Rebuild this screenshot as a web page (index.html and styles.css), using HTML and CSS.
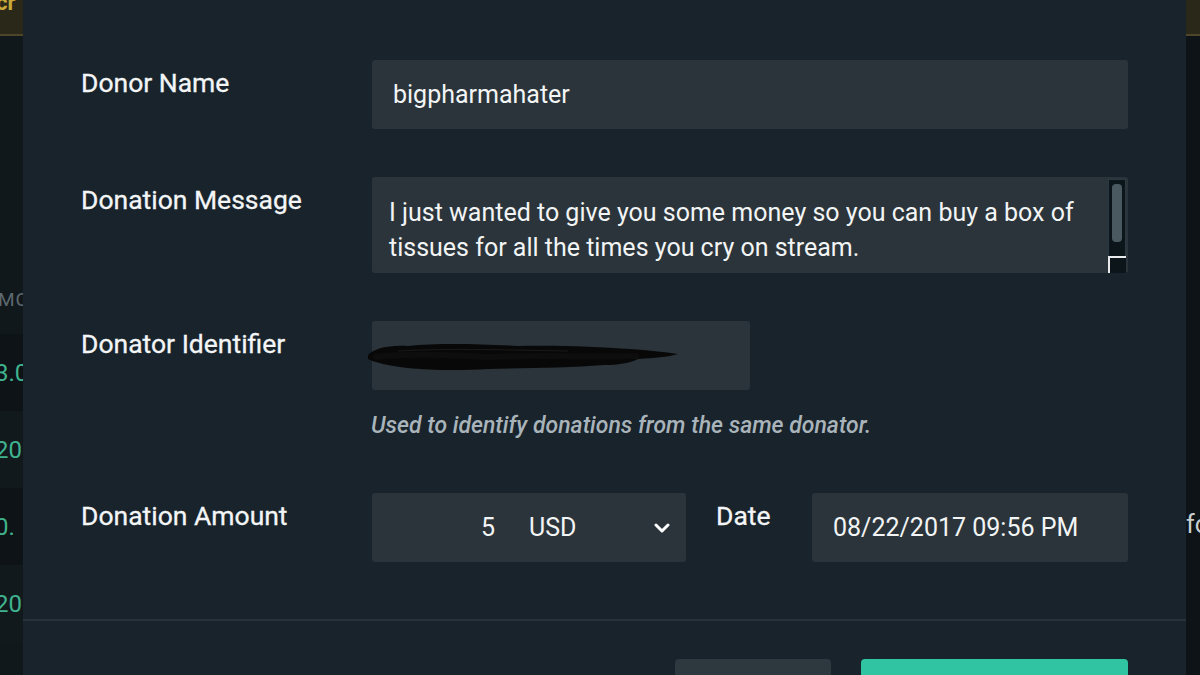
FILE: index.html
```html
<!DOCTYPE html>
<html>
<head>
<meta charset="utf-8">
<link rel="stylesheet" href="styles.css">
</head>
<body>
<div class="screen">
  <aside class="side side-left">
    <div class="side-top"><span class="side-top-text">cr</span></div>
    <div class="side-head">MC</div>
    <div class="side-row odd"><span class="amt">3.0</span></div>
    <div class="side-row"><span class="amt">20</span></div>
    <div class="side-row odd"><span class="amt">0.</span></div>
    <div class="side-row"><span class="amt">20.</span></div>
  </aside>

  <main class="modal">
    <div class="modal-body">
      <div class="field">
        <label class="label">Donor Name</label>
        <div class="control">
          <div class="input">bigpharmahater</div>
        </div>
      </div>

      <div class="field">
        <label class="label">Donation Message</label>
        <div class="control">
          <div class="input textarea">
            <p class="ta-text">I just wanted to give you some money so you can buy a box of tissues for all the times you cry on stream.</p>
            <div class="scrollbar"><div class="thumb"></div></div>
            <div class="resizer"></div>
          </div>
        </div>
      </div>

      <div class="field field-id">
        <label class="label">Donator Identifier</label>
        <div class="control">
          <div class="input input-id">
            <svg class="scribble" width="312" height="44" viewBox="0 0 312 44">
              <path d="M0 20 C6 14 18 10 40 11 C70 8 110 9 150 11 C190 10 230 12 262 14 C280 15 296 17 310 19 C300 22 286 23 270 24 C262 28 250 30 236 30 C200 33 160 33 120 34 C90 36 60 35 40 33 C22 31 8 28 0 24 Z" fill="#080808"/>
              <path d="M8 22 C40 18 80 20 120 22 C170 20 220 22 268 21" stroke="#0d0d0d" stroke-width="6" fill="none" stroke-linecap="round"/>
              <path d="M30 16 C80 13 140 15 200 16" stroke="#1a1a1a" stroke-width="1" fill="none"/>
            </svg>
          </div>
          <p class="help">Used to identify donations from the same donator.</p>
        </div>
      </div>

      <div class="field field-last">
        <label class="label">Donation Amount</label>
        <div class="control row">
          <div class="input amount">
            <span class="amount-num">5</span>
            <span class="currency">USD</span>
            <svg class="chev" width="16" height="12" viewBox="0 0 16 12"><path d="M2 3 L8 9 L14 3" stroke="#fff" stroke-width="3" fill="none" stroke-linecap="round" stroke-linejoin="round"/></svg>
          </div>
          <label class="label date-label">Date</label>
          <div class="input date">08/22/2017 09:56 PM</div>
        </div>
      </div>
    </div>

    <footer class="modal-footer">
      <button class="btn btn-cancel"></button>
      <button class="btn btn-save"></button>
    </footer>
  </main>

  <aside class="side side-right">
    <div class="side-top"></div>
    <div class="right-text">fo</div>
  </aside>
</div>
</body>
</html>
```

FILE: styles.css
```css
* { box-sizing: border-box; }
html, body {
  margin: 0;
  padding: 0;
  width: 1200px;
  height: 675px;
  overflow: hidden;
  background: #0f1519;
  font-family: Roboto, "Noto Sans", "Liberation Sans", sans-serif;
}
.screen {
  display: flex;
  width: 1200px;
  height: 675px;
  overflow: hidden;
}
.side {
  background: #11181c;
  overflow: hidden;
  display: flex;
  flex-direction: column;
}
.side-left { width: 23px; flex: none; }
.side-right { width: 14px; flex: none; background: #0d1317; }
.side-top {
  height: 36px;
  background: #2a2818;
  border-bottom: 2px solid #4e4628;
  flex: none;
}
.side-top-text {
  display: block;
  color: #c9a93a;
  font-size: 22px;
  font-weight: 700;
  margin-top: -10px;
  margin-left: -4px;
}
.side-head {
  height: 298px;
  padding-top: 252px;
  color: #5e6970;
  font-size: 19px;
  letter-spacing: 1px;
  margin-left: -2px;
  flex: none;
}
.side-row {
  height: 77px;
  display: flex;
  align-items: center;
  background: #12191d;
  flex: none;
}
.side-row.odd { background: #0e1317; }
.amt {
  color: #3fb38e;
  font-size: 24px;
  margin-left: -5px;
  white-space: nowrap;
}
.right-text {
  margin-top: 474px;
  color: #c8cdd0;
  font-size: 25px;
  white-space: nowrap;
}

.modal {
  flex: 1;
  background: #18232b;
  display: flex;
  flex-direction: column;
  overflow: hidden;
}
.modal-body {
  flex: none;
  padding: 60px 58px 0 58px;
  height: 621px;
  border-bottom: 2px solid #28343c;
}
.field {
  display: flex;
  margin-bottom: 48px;
}
.field-id { margin-bottom: 53px; }
.label {
  width: 291px;
  flex: none;
  color: #f3f5f6;
  font-size: 26.5px;
  font-weight: 400;
  padding-top: 7px;
  line-height: 32px;
  -webkit-text-stroke: 0.3px #f3f5f6;
}
.control { width: 756px; }
.input {
  height: 69px;
  background: #2b343a;
  border-radius: 3px;
  color: #f2f4f5;
  font-size: 25px;
  display: flex;
  align-items: center;
  padding: 0 21px;
}
.textarea {
  height: 96px;
  position: relative;
  align-items: flex-start;
  padding: 0 36px 0 17px;
}
.ta-text {
  margin: 18px 0 0 0;
  line-height: 35px;
}
.scrollbar {
  position: absolute;
  right: 2px;
  top: 2px;
  width: 18px;
  height: 78px;
  background: #0c151a;
  border: 1px solid #2b3a42;
  padding: 4px 3px;
}
.thumb {
  height: 58px;
  background: #4a5860;
  border-radius: 4px;
}
.resizer {
  position: absolute;
  right: 2px;
  bottom: 0;
  width: 18px;
  height: 17px;
  background: #0c151a;
  border-left: 2px solid #e8eaeb;
  border-top: 2px solid #e8eaeb;
}
.input-id {
  width: 378px;
  padding: 0;
}
.scribble {
  margin-left: -4px;
  margin-top: 2px;
}
.help {
  margin: 22px 0 0 -1px;
  color: #a9b4ba;
  font-style: italic;
  font-weight: 500;
  font-size: 23px;
  line-height: 28px;
}
.row {
  display: flex;
  align-items: flex-start;
}
.amount {
  width: 314px;
  padding: 0 16px 0 0;
}
.amount-num {
  width: 123px;
  text-align: right;
}
.currency {
  margin-left: 34px;
  flex: 1;
}
.chev { display: block; }
.date-label {
  width: auto;
  margin-left: 30px;
}
.date {
  margin-left: auto;
  width: 316px;
}
.modal-footer {
  display: flex;
  justify-content: flex-end;
  padding: 38px 58px 0 0;
  gap: 30px;
}
.btn {
  border: none;
  height: 50px;
  border-radius: 4px;
  padding: 0;
  flex: none;
}
.btn-cancel { width: 156px; background: #2e383f; }
.btn-save { width: 267px; background: #31c4a3; }
```
